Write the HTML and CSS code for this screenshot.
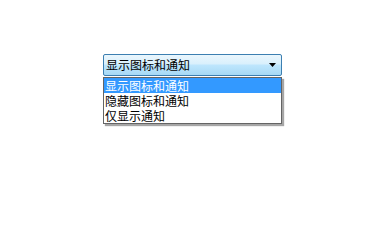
FILE: index.html
```html
<!DOCTYPE html>
<html>
<head>
<meta charset="utf-8">
<link rel="stylesheet" href="styles.css">
</head>
<body>
<div class="stage">
  <div class="combo-wrap">
    <div class="combo">
      <span class="combo-text">显示图标和通知</span>
      <svg class="arrow" width="7" height="4" viewBox="0 0 7 4"><path d="M0 0H7L3.5 4Z" fill="#000"/></svg>
    </div>
    <ul class="list">
      <li class="item selected">显示图标和通知</li>
      <li class="item">隐藏图标和通知</li>
      <li class="item">仅显示通知</li>
    </ul>
  </div>
</div>
</body>
</html>
```
FILE: styles.css
```css
html, body {
  margin: 0;
  padding: 0;
  background: #ffffff;
}
.stage {
  width: 390px;
  height: 230px;
  padding: 54px 0 0 103px;
  box-sizing: border-box;
  font-family: "Noto Sans CJK SC", "Noto Sans", sans-serif;
  font-size: 12px;
  color: #000;
}
.combo-wrap {
  position: relative;
  width: 179px;
}
.combo {
  height: 22px;
  box-sizing: border-box;
  border: 1px solid #3c7fb1;
  border-radius: 2px;
  background: linear-gradient(to bottom, #eaf6fd 0%, #d9f0fc 45%, #bee6fd 50%, #a7d9f5 100%);
  display: flex;
  align-items: center;
  justify-content: space-between;
  padding: 0 4px 0 2px;
}
.combo-text {
  line-height: 16px;
}
.arrow {
  display: block;
  margin-right: 1px;
}
.list {
  position: absolute;
  top: 23px;
  left: 0;
  width: 179px;
  box-sizing: border-box;
  margin: 0;
  padding: 0;
  list-style: none;
  background: #fff;
  border: 1px solid #646464;
  box-shadow: 2px 2px 1px rgba(0, 0, 0, 0.35);
}
.item {
  height: 15px;
  line-height: 15px;
  padding-left: 1px;
  white-space: nowrap;
}
.item.selected {
  background: #3399ff;
  color: #fff;
}
```
